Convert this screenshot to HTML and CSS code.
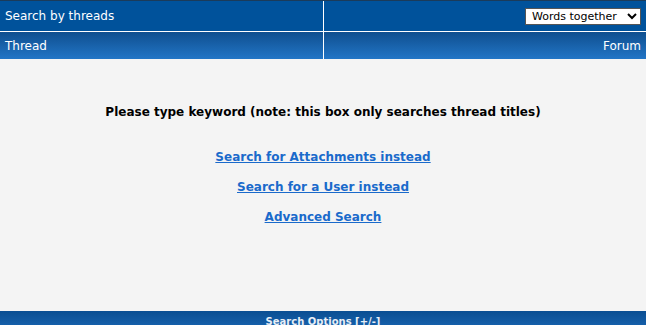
FILE: index.html
```html
<!DOCTYPE html>
<html lang="en">
<head>
  <meta charset="UTF-8" />
  <title>Search by threads</title>
  <link rel="stylesheet" href="styles.css">
</head>
<body>
  <div class="search-box">
    <div class="head-row">
      <div class="cell title">Search by threads</div>
      <div class="cell right">
        <select class="mode">
          <option>Words together</option>
          <option>Any word</option>
          <option>All words</option>
        </select>
      </div>
    </div>
    <div class="col-row">
      <div class="cell">Thread</div>
      <div class="cell right">Forum</div>
    </div>
    <div class="results">
      <p class="hint">Please type keyword (note: this box only searches thread titles)</p>
      <a href="#">Search for Attachments instead</a>
      <a href="#">Search for a User instead</a>
      <a href="#">Advanced Search</a>
    </div>
    <div class="options">Search Options [+/-]</div>
  </div>
</body>
</html>
```

FILE: styles.css
```css
body {
  margin: 0;
  background: #f4f4f4;
  font-family: "DejaVu Sans", Verdana, sans-serif;
  font-size: 12px;
  overflow: hidden;
}
.search-box {
  border-top: 1px solid #1b3b5a;
}
.head-row, .col-row {
  display: grid;
  grid-template-columns: 323px 1fr;
  column-gap: 1px;
  background: #fff;
  color: #fff;
}
.head-row {
  height: 30px;
  border-bottom: 1px solid #fff;
}
.head-row .cell {
  background: #00529b;
}
.col-row {
  height: 27px;
}
.col-row .cell {
  background: linear-gradient(#0f4f8f, #2275c6);
}
.cell {
  display: flex;
  align-items: center;
  padding: 0 5px;
}
.cell.right {
  justify-content: flex-end;
}
.mode {
  font-family: "DejaVu Sans", Verdana, sans-serif;
  font-size: 11px;
  height: 17px;
  width: 116px;
  padding: 0 2px;
  border: 1px solid #555;
  border-radius: 0;
  background: #fff;
  color: #000;
}
.results {
  height: 252px;
  display: flex;
  flex-direction: column;
  align-items: center;
  padding-top: 46px;
  box-sizing: border-box;
  line-height: 14px;
}
.hint {
  margin: 0 0 31px;
  font-weight: bold;
  color: #000;
}
.results a {
  font-weight: bold;
  color: #1a6acb;
  margin-bottom: 16px;
}
.options {
  height: 20px;
  background: linear-gradient(#0a4e92, #1a66b3);
  color: #e8eef6;
  font-size: 10px;
  font-weight: bold;
  text-align: center;
  padding-top: 5px;
  box-sizing: border-box;
}
```
